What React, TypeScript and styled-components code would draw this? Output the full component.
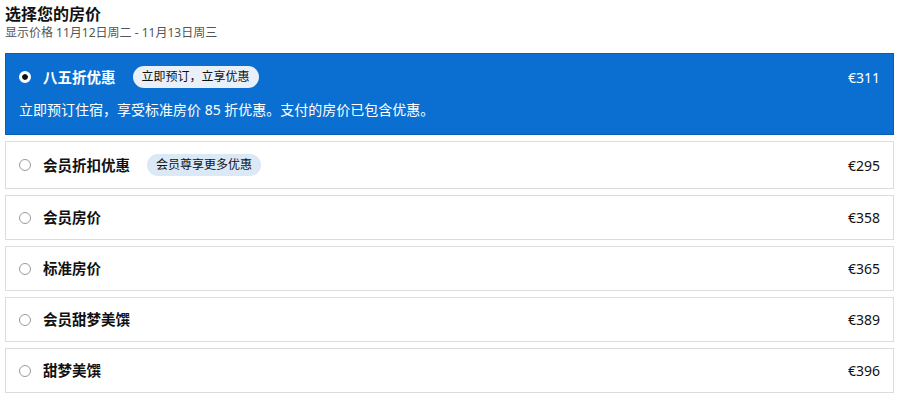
import React from 'react';
import styled, { createGlobalStyle } from 'styled-components';

const GlobalStyle = createGlobalStyle`
  body {
    margin: 0;
    font-family: "Noto Sans", "Noto Sans CJK SC", sans-serif;
    color: #111;
    background: #fff;
  }
`;

const Page = styled.div`
  padding: 3px 6px 0 5px;
`;

const Title = styled.h2`
  margin: 0;
  font-size: 16px;
  font-weight: 700;
  line-height: 22px;
`;

const Subtitle = styled.div`
  font-size: 12px;
  color: #555;
  line-height: 16px;
  margin-bottom: 12px;
`;

const List = styled.div`
  display: flex;
  flex-direction: column;
  gap: 6px;
`;

const Card = styled.label<{ $selected?: boolean }>`
  display: block;
  border: 1px solid ${(p) => (p.$selected ? '#0a5fb4' : '#dcdcdc')};
  background: ${(p) => (p.$selected ? '#0a6fd1' : '#fff')};
  color: ${(p) => (p.$selected ? '#fff' : '#111')};
  padding: 0 13px;
`;

const Row = styled.div`
  display: flex;
  align-items: center;
  padding: 12px 0;
  line-height: 19px;
`;

const Radio = styled.span<{ $selected?: boolean }>`
  width: 12px;
  height: 12px;
  border-radius: 50%;
  box-sizing: border-box;
  margin-right: 12px;
  flex-shrink: 0;
  background: #fff;
  border: ${(p) => (p.$selected ? '3px solid #fff' : '1px solid #9a9a9a')};
  box-shadow: ${(p) => (p.$selected ? 'inset 0 0 0 4px #111' : 'none')};
`;

const Name = styled.span`
  font-size: 14.5px;
  font-weight: 700;
`;

const Badge = styled.span<{ $light?: boolean }>`
  margin-left: 17px;
  padding: 0 9px;
  height: 22px;
  line-height: 22px;
  border-radius: 11px;
  font-size: 12px;
  background: ${(p) => (p.$light ? '#dbe8f6' : '#e9f0f9')};
  color: #111;
`;

const Price = styled.span`
  margin-left: auto;
  font-size: 14px;
`;

const Description = styled.div`
  font-size: 14px;
  line-height: 20px;
  padding-bottom: 14px;
`;

const rates = [
  { name: '会员折扣优惠', badge: '会员尊享更多优惠', price: '€295' },
  { name: '会员房价', price: '€358' },
  { name: '标准房价', price: '€365' },
  { name: '会员甜梦美馔', price: '€389' },
  { name: '甜梦美馔', price: '€396' },
];

export default function App() {
  return (
    <Page>
      <GlobalStyle />
      <Title>选择您的房价</Title>
      <Subtitle>显示价格 11月12日周二 - 11月13日周三</Subtitle>
      <List>
        <Card $selected>
          <Row>
            <Radio $selected />
            <Name>八五折优惠</Name>
            <Badge>立即预订，立享优惠</Badge>
            <Price>€311</Price>
          </Row>
          <Description>立即预订住宿，享受标准房价 85 折优惠。支付的房价已包含优惠。</Description>
        </Card>
        {rates.map((r) => (
          <Card key={r.name}>
            <Row>
              <Radio />
              <Name>{r.name}</Name>
              {r.badge && <Badge $light>{r.badge}</Badge>}
              <Price>{r.price}</Price>
            </Row>
          </Card>
        ))}
      </List>
    </Page>
  );
}
